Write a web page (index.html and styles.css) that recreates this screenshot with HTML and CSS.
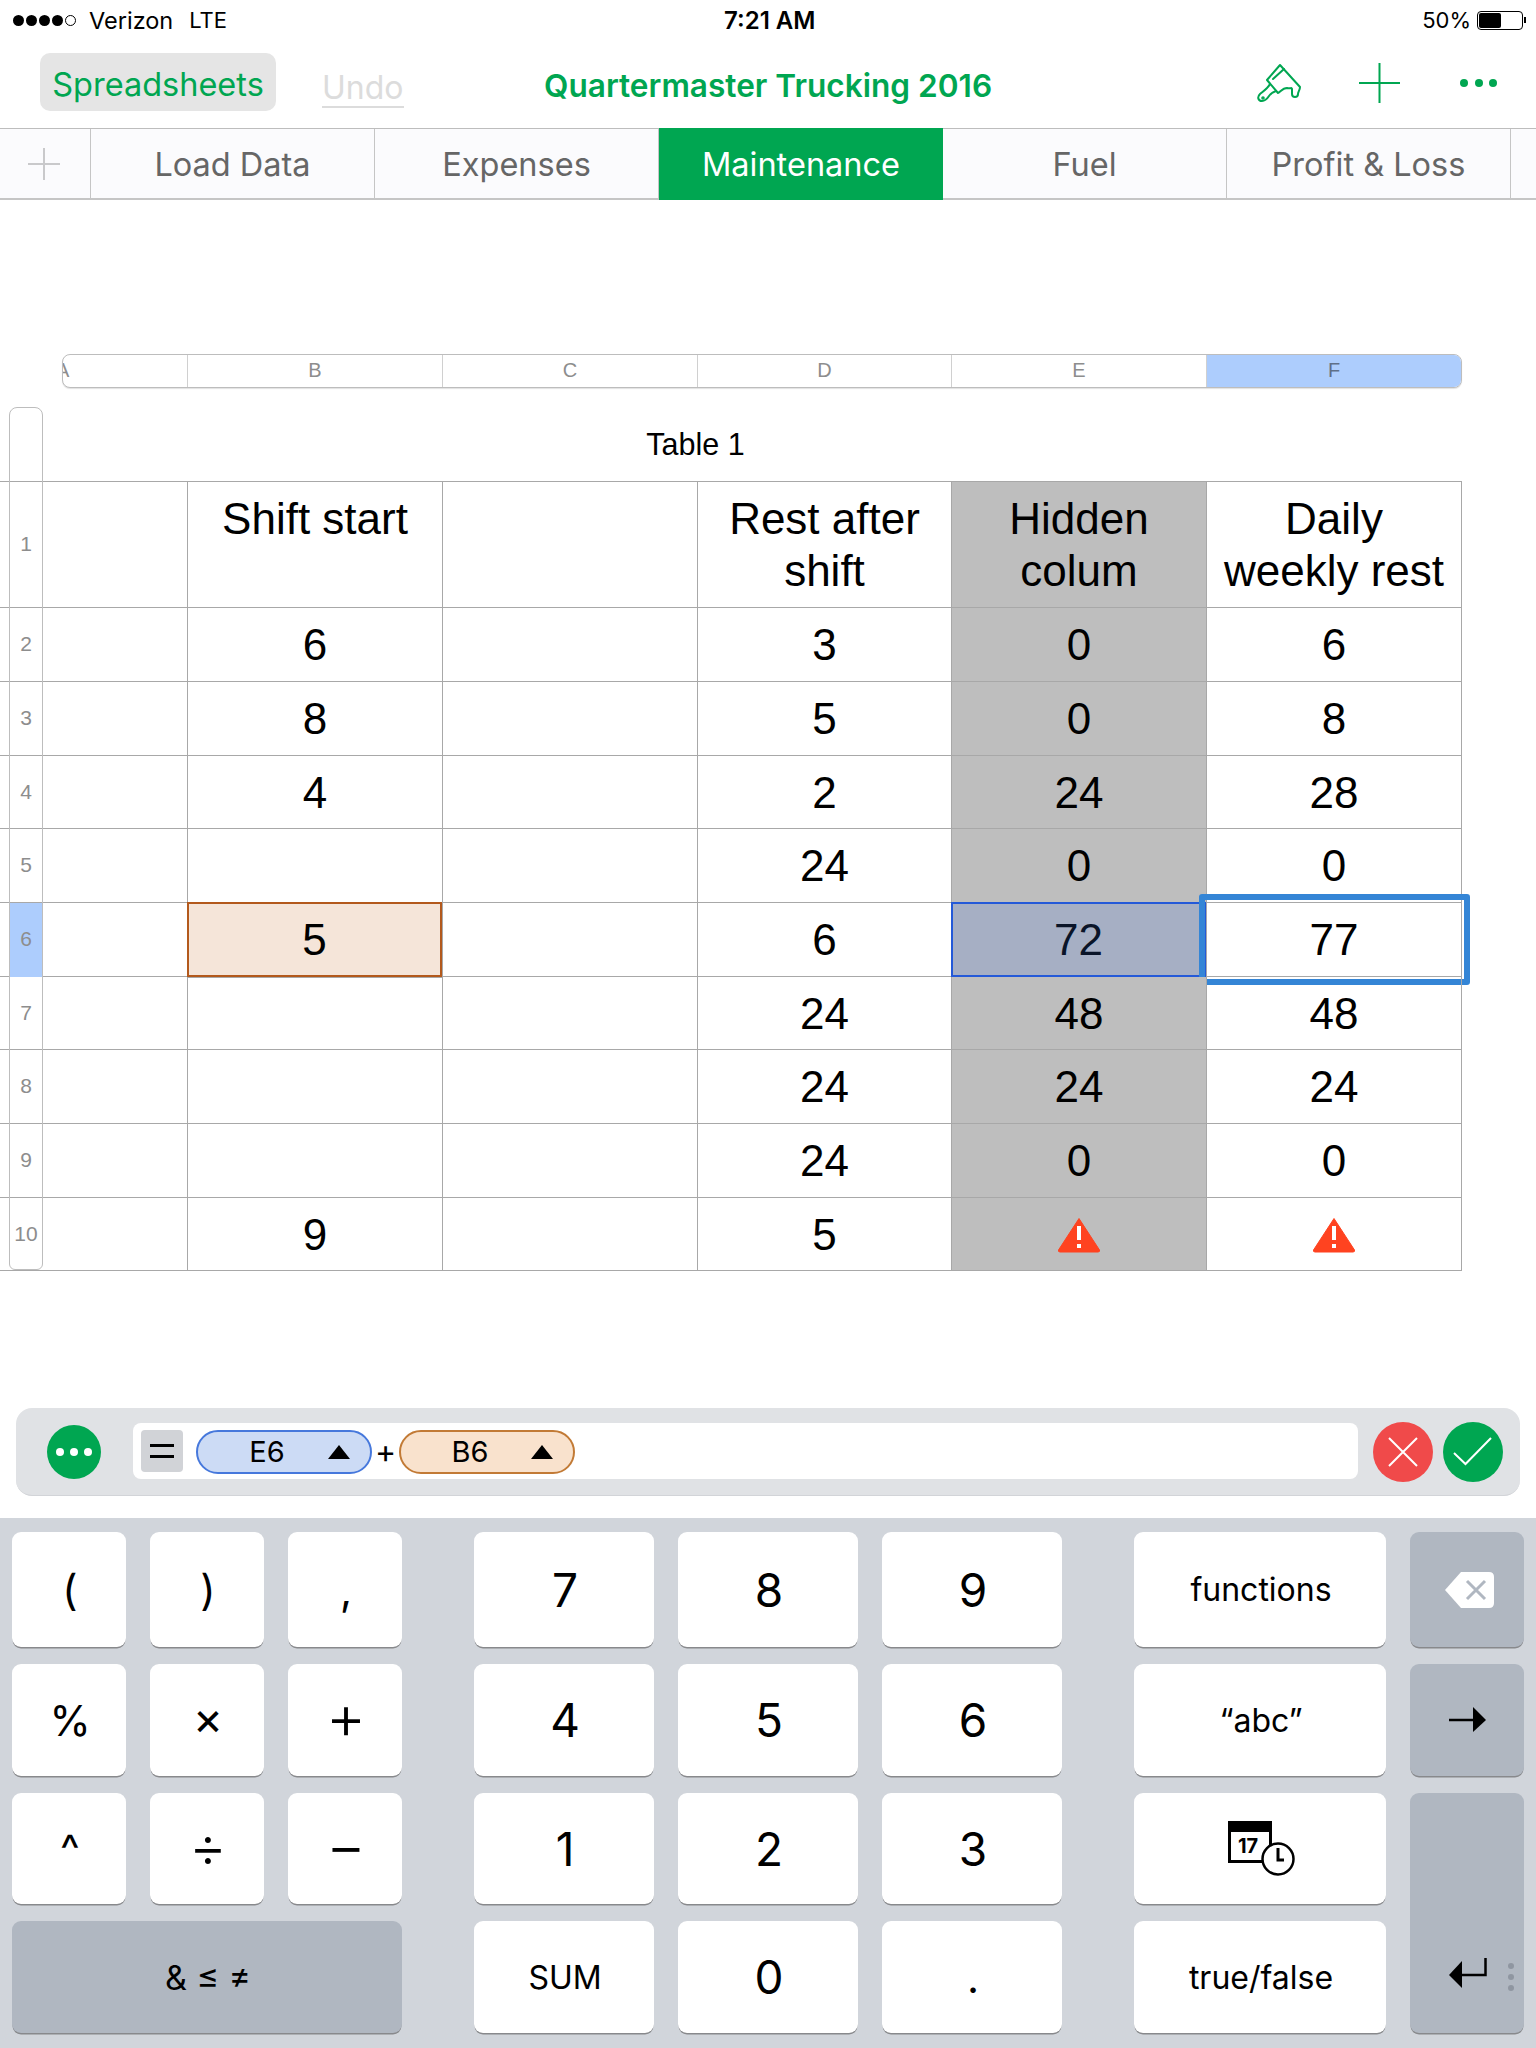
FILE: index.html
```html
<!DOCTYPE html>
<html lang="en">
<head>
<meta charset="utf-8">
<title>Quartermaster Trucking 2016</title>
<link rel="stylesheet" href="styles.css">
</head>
<body>
<div class="status">
  <div class="status-left">
    <span class="signal"><i></i><i></i><i></i><i></i><i class="off"></i></span>
    <span>Verizon</span><span class="lte">LTE</span>
  </div>
  <div class="status-time">7:21 AM</div>
  <div class="status-right">
    <span>50%</span>
    <span class="battery"><b></b></span><span class="nub"></span>
  </div>
</div>

<div class="toolbar">
  <div class="back">Spreadsheets</div>
  <div class="undo">Undo</div>
  <div class="doc-title">Quartermaster Trucking 2016</div>
  <svg class="brush" width="70" height="55" viewBox="0 0 70 55" fill="none" stroke="#00a651" stroke-width="2" stroke-linejoin="round" stroke-linecap="round">
    <path d="M35 10 L22 25 L33 38 C36 36 38 33 42 33 C45 34 47 32 47 34 L47 39 C47 43 53 43 53 39 C53 37 55 35 55 32 Z"/>
    <path d="M28 24 L39 14"/>
    <path d="M25 29 C23 33 20 35 15 39 C12 42 13 46 17 46 C19 46 22 44 24 41 C26 38 28 37 31 36"/>
    <circle cx="18" cy="43" r="0.8"/>
  </svg>
  <svg class="plus" width="42" height="40" viewBox="0 0 42 40" stroke="#00a651" stroke-width="2"><path d="M0 20H41M20.500 0V40"/></svg>
  <div class="dots"><i></i><i></i><i></i></div>
</div>

<div class="tabs">
  <div class="tab-add"><svg width="34" height="32" viewBox="0 0 34 32" stroke="#c9c9cb" stroke-width="2"><path d="M1 16H33M17 0V32"/></svg></div>
  <div class="tab">Load Data</div>
  <div class="tab">Expenses</div>
  <div class="tab active">Maintenance</div>
  <div class="tab">Fuel</div>
  <div class="tab">Profit &amp; Loss</div>
</div>

<div class="sheet">
  <div class="col-headers">
    <div class="ch ch-a"><span>A</span></div>
    <div class="ch">B</div>
    <div class="ch">C</div>
    <div class="ch">D</div>
    <div class="ch">E</div>
    <div class="ch ch-f">F</div>
  </div>
  <div class="table-title">Table 1</div>
  <div class="row-rail"></div>
  <div class="grid">
    <div class="c rh">1</div><div class="c"></div><div class="c head">Shift start</div><div class="c"></div><div class="c head">Rest after shift</div><div class="c head gray">Hidden colum</div><div class="c head">Daily weekly rest</div>
    <div class="c rh">2</div><div class="c"></div><div class="c">6</div><div class="c"></div><div class="c">3</div><div class="c gray">0</div><div class="c">6</div>
    <div class="c rh">3</div><div class="c"></div><div class="c">8</div><div class="c"></div><div class="c">5</div><div class="c gray">0</div><div class="c">8</div>
    <div class="c rh">4</div><div class="c"></div><div class="c">4</div><div class="c"></div><div class="c">2</div><div class="c gray">24</div><div class="c">28</div>
    <div class="c rh">5</div><div class="c"></div><div class="c"></div><div class="c"></div><div class="c">24</div><div class="c gray">0</div><div class="c">0</div>
    <div class="c rh rh-on">6</div><div class="c"></div><div class="c ref-b">5</div><div class="c"></div><div class="c">6</div><div class="c ref-e">72</div><div class="c sel">77</div>
    <div class="c rh">7</div><div class="c"></div><div class="c"></div><div class="c"></div><div class="c">24</div><div class="c gray">48</div><div class="c">48</div>
    <div class="c rh">8</div><div class="c"></div><div class="c"></div><div class="c"></div><div class="c">24</div><div class="c gray">24</div><div class="c">24</div>
    <div class="c rh">9</div><div class="c"></div><div class="c"></div><div class="c"></div><div class="c">24</div><div class="c gray">0</div><div class="c">0</div>
    <div class="c rh">10</div><div class="c"></div><div class="c">9</div><div class="c"></div><div class="c">5</div>
    <div class="c gray"><svg class="warn" width="44" height="36" viewBox="0 0 44 36"><path d="M22 1.500 L42.500 33 Q43 35 41 35 H3 Q1 35 1.500 33 Z" fill="#ff4320" stroke="#ff4320" stroke-width="1" stroke-linejoin="round"/><path d="M20 9H24V23H20ZM20 27H24V31H20Z" fill="#fff"/></svg></div>
    <div class="c"><svg class="warn" width="44" height="36" viewBox="0 0 44 36"><path d="M22 1.500 L42.500 33 Q43 35 41 35 H3 Q1 35 1.500 33 Z" fill="#ff4320" stroke="#ff4320" stroke-width="1" stroke-linejoin="round"/><path d="M20 9H24V23H20ZM20 27H24V31H20Z" fill="#fff"/></svg></div>
  </div>
</div>

<div class="formula">
  <div class="fx-more"><i></i><i></i><i></i></div>
  <div class="fx-input">
    <div class="eq"><i></i><i></i></div>
    <div class="pill pill-e"><span>E6</span><em></em></div>
    <span class="op">+</span>
    <div class="pill pill-b"><span>B6</span><em></em></div>
  </div>
  <div class="fx-btn cancel"><svg width="30" height="30" viewBox="0 0 30 30" stroke="#fff" stroke-width="2"><path d="M1 1L29 29M29 1L1 29"/></svg></div>
  <div class="fx-btn ok"><svg width="40" height="30" viewBox="0 0 40 30" fill="none" stroke="#fff" stroke-width="2"><path d="M1 16L12.500 27L38 1"/></svg></div>
</div>

<div class="keyboard">
  <div class="kgroup g-ops">
    <div class="key">(</div><div class="key">)</div><div class="key">,</div>
    <div class="key">%</div><div class="key times">×</div><div class="key plus-key">+</div>
    <div class="key">^</div><div class="key divide">÷</div><div class="key minus">−</div>
    <div class="key dark span3 amp">&amp; ≤ ≠</div>
  </div>
  <div class="kgroup g-num">
    <div class="key num">7</div><div class="key num">8</div><div class="key num">9</div>
    <div class="key num">4</div><div class="key num">5</div><div class="key num">6</div>
    <div class="key num">1</div><div class="key num">2</div><div class="key num">3</div>
    <div class="key small">SUM</div><div class="key num">0</div><div class="key">.</div>
  </div>
  <div class="kgroup g-fn">
    <div class="key small">functions</div>
    <div class="key small">“abc”</div>
    <div class="key"><div class="datetime">
      <svg width="68" height="56" viewBox="0 0 68 56"><path d="M1.500 1.500H42.500V40.500H1.500Z" fill="#fff" stroke="#000" stroke-width="3"/><path d="M0 2Q0 0 2 0H42Q44 0 44 2V11H0Z"/><circle cx="50" cy="38" r="15.500" fill="#fff" stroke="#000" stroke-width="2.500"/><path d="M50 27V39H56" fill="none" stroke="#000" stroke-width="3"/></svg>
      <span>17</span>
    </div></div>
    <div class="key small">true/false</div>
  </div>
  <div class="kgroup g-side">
    <div class="key dark"><svg class="bksp" width="50" height="36" viewBox="0 0 50 36"><path d="M16 0H44Q49 0 49 5V31Q49 36 44 36H16L0 18Z" fill="#fff"/><path d="M22 9L40 27M40 9L22 27" stroke="#b0b7c1" stroke-width="3"/></svg></div>
    <div class="key dark"><svg width="38" height="26" viewBox="0 0 38 26"><path d="M0 13H26" stroke="#000" stroke-width="2.500"/><path d="M24 0L37 13L24 25Z"/></svg></div>
    <div class="key dark ret">
      <svg class="ret-icon" width="38" height="30" viewBox="0 0 38 30"><path d="M36.500 0V17H10" fill="none" stroke="#000" stroke-width="2.500"/><path d="M13 3V30L0 17Z"/></svg>
      <div class="grip"><i></i><i></i><i></i></div>
    </div>
  </div>
</div>
</body>
</html>
```

FILE: styles.css
```css
* { box-sizing: border-box; }
html, body { margin: 0; padding: 0; }
body {
  width: 1536px;
  height: 2048px;
  overflow: hidden;
  background: #fff;
  font-family: Inter, "Liberation Sans", sans-serif;
  color: #000;
  position: relative;
}

/* status bar */
.status {
  height: 40px;
  display: flex;
  align-items: center;
  justify-content: space-between;
  padding: 0 10px 0 13px;
  font-size: 22px;
  position: relative;
}
.status-left, .status-right { display: flex; align-items: center; }
.status-left { font-size: 23.5px; }
.signal { display: flex; gap: 2px; margin-right: 13px; }
.signal i { width: 11px; height: 11px; border-radius: 50%; background: #000; }
.signal i.off { background: #fff; border: 1px solid #000; }
.lte { margin-left: 16px; font-size: 22px; }
.status-time { position: absolute; left: 724px; top: 7px; font-size: 24px; font-weight: 600; line-height: 27px; }
.battery {
  width: 46px; height: 19px; margin-left: 6px;
  border: 1px solid #000; border-radius: 4px; padding: 1px; display: block;
}
.battery b { display: block; width: 22px; height: 15px; background: #000; border-radius: 2px; }
.nub { width: 2px; height: 6px; background: #000; margin-left: 1px; }

/* toolbar */
.toolbar {
  height: 88px;
  position: relative;
  color: #00a651;
}
.back {
  position: absolute; left: 40px; top: 13px;
  width: 236px; height: 58px;
  background: #e5e5e5; border-radius: 10px;
  text-align: center; line-height: 64px;
  font-size: 32.5px;
}
.undo {
  position: absolute; left: 322px; top: 29px;
  font-size: 32px; line-height: 37px;
  color: #dcdcdc; border-bottom: 2px solid #dcdcdc;
}
.doc-title {
  position: absolute; left: 544px; top: 45px; transform: translateY(-50%);
  font-size: 31.6px; font-weight: 600; white-space: nowrap;
}
.brush { position: absolute; left: 1245px; top: 15px; }
.plus { position: absolute; left: 1359px; top: 23px; }
.dots { position: absolute; left: 1460px; top: 39px; display: flex; gap: 6.5px; }
.dots i { width: 8px; height: 8px; border-radius: 50%; background: #00a651; }

/* tabs */
.tabs {
  height: 72px;
  display: flex;
  background: #fbfbfd;
  border-top: 1px solid #bdbdbd;
  border-bottom: 2px solid #c5c5c5;
}
.tab-add {
  width: 91px; border-right: 1px solid #c5c5c5;
  display: flex; align-items: center; justify-content: center;
  padding-right: 3px;
}
.tab {
  width: 284px;
  border-right: 1px solid #c5c5c5;
  display: flex; align-items: center; justify-content: center;
  color: #666;
  font-size: 32.5px;
  padding-top: 2px;
}
.tab.active { background: #00a651; color: #fff; border-right: 0; margin: -1px 0 -2px; padding-top: 0; }

/* sheet */
.sheet { height: 1208px; position: relative; }
.col-headers {
  position: absolute; left: 62px; top: 154px;
  width: 1400px; height: 34px;
  display: grid;
  grid-template-columns: 125px 255px 255px 254px 255px 254px;
  border: 1px solid #bdbdbd;
  border-radius: 8px;
  box-shadow: 0 1px 1px rgba(0,0,0,.12);
  overflow: hidden;
  background: #fff;
}
.ch {
  border-right: 1px solid #d0d0d0;
  text-align: center;
  font: 20px/31px "Liberation Sans", sans-serif;
  color: #8d8d8d;
  overflow: hidden;
}
.ch:last-child { border-right: 0; }
.ch-a { position: relative; }
.ch-a span { position: absolute; left: -7px; top: 0; }
.ch-f { background: #adcdfd; color: #5f6f88; }

.table-title {
  position: absolute; left: 0; top: 227px; width: 1391px;
  text-align: center;
  font: 30.5px/34px "Liberation Sans", sans-serif;
}
.row-rail {
  position: absolute; left: 9px; top: 207px;
  width: 34px; height: 863px;
  border: 1px solid #bdbdbd; border-radius: 8px 8px 6px 6px;
  z-index: 2;
  pointer-events: none;
}
.grid {
  position: absolute; left: 0; top: 281px;
  display: grid;
  grid-template-columns: 43px 145px 255px 255px 254px 255px 255px;
  grid-template-rows: 126px 74px 74px 73px 74px 74px 73px 74px 74px 73px;
  width: 1462px;
  border-top: 1px solid #a8a8a8;
  font: 44px/52px "Liberation Sans", sans-serif;
}
.c {
  border-right: 1px solid #a8a8a8;
  border-bottom: 1px solid #a8a8a8;
  display: flex; align-items: center; justify-content: center;
  text-align: center;
  position: relative;
  padding-top: 1px;
}
.c.head { align-items: flex-start; padding: 11px 8px 0; }
.rh {
  border-right: 0;
  font: 21px/24px "Liberation Sans", sans-serif;
  color: #8d8d8d;
  padding: 0 0 1px 9px;
  z-index: 1;
}
.rh-on::before {
  content: ""; position: absolute; left: 10px; right: 1px; top: 0; bottom: -1px;
  background: #adcdfd; z-index: -1;
}
.gray { background: #bebebe; }
.ref-b { background: #f5e5d9; box-shadow: inset 0 0 0 2px #b3591c; margin: -1px 0 -1px -1px; }
.ref-e { background: #a6afc4; box-shadow: inset 0 0 0 2px #2459d8; margin: -1px 0 -1px -1px; color: #0a1428; }
.sel::after {
  content: ""; position: absolute;
  left: -8px; right: -9px; top: -9px; bottom: -9px;
  border: 6px solid #3485d6; border-radius: 3px;
}
.warn { display: block; }

/* formula bar */
.formula {
  position: absolute; left: 16px; top: 1408px;
  width: 1504px; height: 88px;
  background: #e0e2e5;
  border-radius: 16px;
  border-bottom: 1px solid #d2d4d8;
  display: flex; align-items: flex-start;
}
.fx-more {
  width: 54px; height: 54px; margin: 17px 32px 0 31px;
  border-radius: 50%; background: #00a651;
  display: flex; align-items: center; justify-content: center; gap: 6px;
}
.fx-more i { width: 8px; height: 8px; border-radius: 50%; background: #fff; }
.fx-input {
  width: 1225px; height: 56px; margin-top: 15px;
  background: #fff; border-radius: 8px;
  display: flex; align-items: flex-start;
  padding: 7px 0 0 8px;
}
.eq {
  width: 42px; height: 42px; background: #d1d3d7; border-radius: 4px;
  display: flex; flex-direction: column; align-items: center; justify-content: center; gap: 8px;
  margin-right: 13px;
}
.eq i { width: 24px; height: 3px; background: #000; }
.pill {
  width: 176px; height: 44px; border-radius: 22px;
  border: 2px solid; position: relative;
  font-size: 29px; line-height: 40px;
}
.pill span { position: absolute; left: 50px; width: 38px; text-align: center; }
.pill em {
  position: absolute; left: 130px; top: 13px;
  width: 0; height: 0;
  border-left: 11px solid transparent; border-right: 11px solid transparent;
  border-bottom: 14px solid #000;
}
.pill-e { background: #ccdbf5; border-color: #4678dc; }
.pill-b { background: #f9e2cd; border-color: #c27a35; }
.op { width: 27px; text-align: center; font-size: 32px; line-height: 44px; }
.fx-btn {
  width: 60px; height: 60px; margin-top: 14px; border-radius: 50%;
  display: flex; align-items: center; justify-content: center;
}
.cancel { background: #f04a4a; margin-left: 15px; }
.ok { background: #00a651; margin-left: 10px; }

/* keyboard */
.keyboard {
  position: absolute; left: 0; top: 1518px;
  width: 1536px; height: 530px;
  background: #d1d5db;
  padding: 14px 0 0 12px;
  display: flex;
  gap: 72px;
}
.kgroup {
  display: grid;
  grid-template-rows: 115px 112px 111px 112px;
  row-gap: 17px;
  column-gap: 24px;
  height: 501px;
}
.g-ops { grid-template-columns: repeat(3, 114px); }
.g-num { grid-template-columns: repeat(3, 180px); }
.g-fn { grid-template-columns: 252px; }
.g-side { grid-template-columns: 114px; margin-left: -48px; }
.key {
  background: #fff;
  border-radius: 9px;
  box-shadow: 0 2px 0 -0.5px #88898c;
  display: flex; align-items: center; justify-content: center;
  font-size: 42px;
  padding-left: 2px;
  position: relative;
}
.key.num { font-size: 46px; }
.key.small { font-size: 32px; }
.key.amp { font-size: 34px; }
.key.times { font-size: 46px; padding-bottom: 5px; }
.key.divide { font-size: 58px; font-weight: 300; padding-bottom: 5px; }
.key.plus-key { font-size: 62px; font-weight: 300; padding-bottom: 7px; }
.key.minus { font-size: 61px; font-weight: 300; padding-bottom: 7px; }
.key.dark { background: #b0b7c1; }
.bksp { margin-left: 3px; }
.span3 { grid-column: span 3; }
.ret { grid-row: span 2; align-items: flex-end; }
.ret-icon { position: absolute; left: 39px; top: 165px; }
.grip { position: absolute; left: 98px; top: 170px; display: flex; flex-direction: column; gap: 5px; }
.grip i { width: 6px; height: 6px; border-radius: 50%; background: #8f96a1; }
.datetime { position: relative; width: 68px; height: 56px; margin-left: 2px; }
.datetime svg { display: block; }
.datetime span { position: absolute; left: 10px; top: 14px; font-size: 20px; line-height: 22px; font-weight: 700; }
```
